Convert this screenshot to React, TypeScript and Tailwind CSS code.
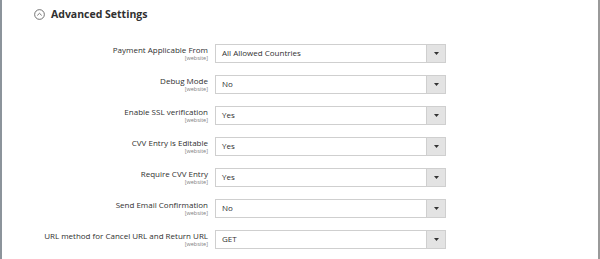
import React from "react"

const rows = [
  { label: "Payment Applicable From", value: "All Allowed Countries" },
  { label: "Debug Mode", value: "No" },
  { label: "Enable SSL verification", value: "Yes" },
  { label: "CVV Entry is Editable", value: "Yes" },
  { label: "Require CVV Entry", value: "Yes" },
  { label: "Send Email Confirmation", value: "No" },
  { label: "URL method for Cancel URL and Return URL", value: "GET" },
]

function SelectBox({ value }: { value: string }) {
  return (
    <div className="flex h-[19px] w-[231px] items-stretch border border-[#cfcfcf] bg-white">
      <div className="flex flex-1 items-center pl-[6px] text-[8px] text-[#303030]">{value}</div>
      <div className="flex w-[19px] items-center justify-center border-l border-[#cfcfcf] bg-[#e3e3e3]">
        <svg width="5" height="3" viewBox="0 0 5 3">
          <path d="M0 0h5L2.5 3z" fill="#333" />
        </svg>
      </div>
    </div>
  )
}

export default function App() {
  return (
    <div
      className="h-[259px] w-[600px] overflow-hidden border-l-2 border-r-2 border-l-[#8c949b] border-r-[#9a9a9a] bg-white"
      style={{ fontFamily: '"Open Sans", "Noto Sans", sans-serif' }}
    >
      <div className="flex items-center gap-[6px] pl-[32px] pt-[7px]">
        <svg width="11" height="11" viewBox="0 0 12 12">
          <circle cx="6" cy="6" r="5.3" fill="none" stroke="#555" strokeWidth="0.9" />
          <path d="M3.6 7L6 4.7 8.4 7" fill="none" stroke="#555" strokeWidth="0.9" />
        </svg>
        <span className="text-[10.5px] font-bold text-[#303030]">Advanced Settings</span>
      </div>
      <div className="mt-[21px] flex flex-col gap-[12px]">
        {rows.map((r) => (
          <div key={r.label} className="flex items-start">
            <div className="flex w-[206px] flex-col items-end pt-[1px] leading-none">
              <span className="text-[8px] leading-[10px] text-[#303030]">{r.label}</span>
              <span className="text-[5.5px] leading-[7px] text-[#808080]">[website]</span>
            </div>
            <div className="ml-[7px]">
              <SelectBox value={r.value} />
            </div>
          </div>
        ))}
      </div>
    </div>
  )
}
